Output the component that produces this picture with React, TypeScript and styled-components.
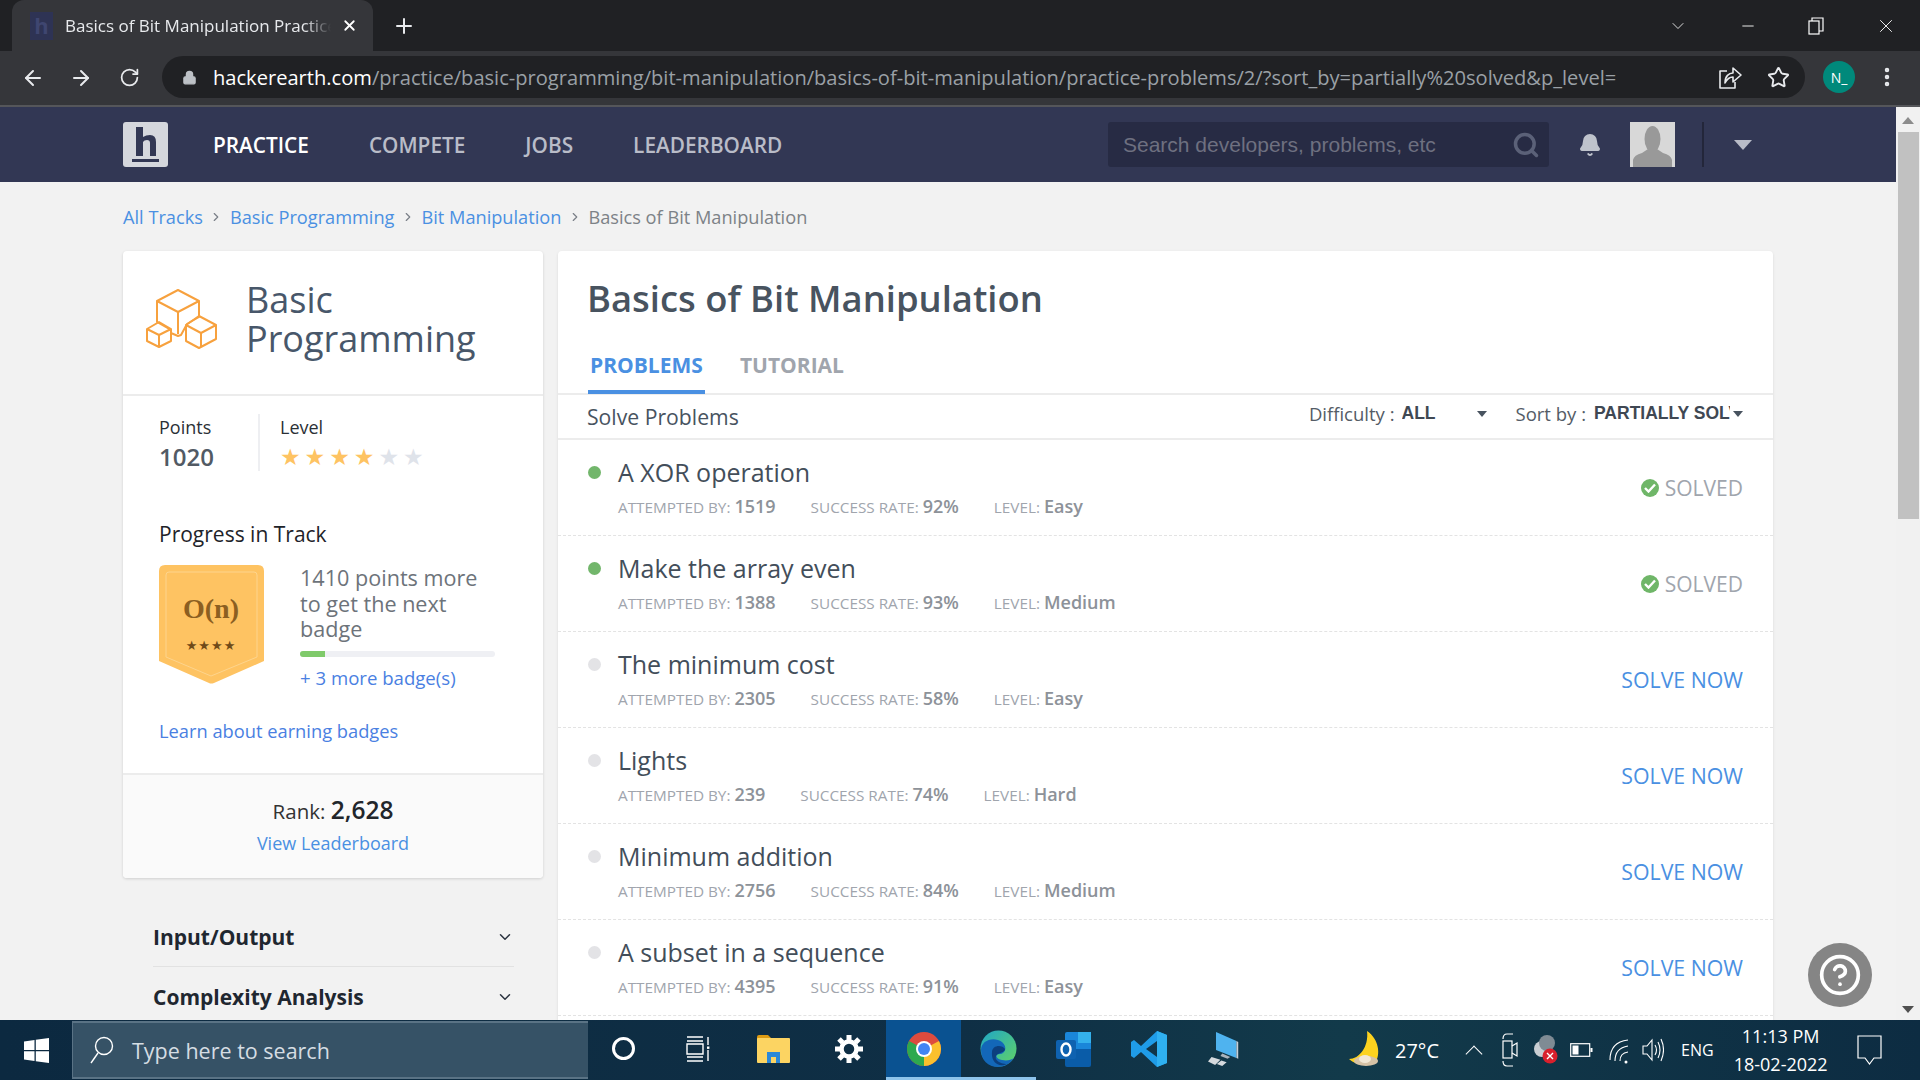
import styled, { createGlobalStyle } from "styled-components";
import { ArrowLeft, ArrowRight, RotateCw, Lock, Star, Search, Bell, ChevronDown, ChevronRight, Minus, Plus, X, MoreVertical, HelpCircle } from "lucide-react";

const GlobalStyle = createGlobalStyle`
  html, body { margin: 0; height: 100%; overflow: hidden; }
  #root { height: 100%; }
  * { box-sizing: border-box; }
  body { font-family: "Open Sans", "Liberation Sans", sans-serif; background: #f2f2f2; }
`;

const problems = [
  { title: "A XOR operation", attempted: "1519", rate: "92%", level: "Easy", solved: true },
  { title: "Make the array even", attempted: "1388", rate: "93%", level: "Medium", solved: true },
  { title: "The minimum cost", attempted: "2305", rate: "58%", level: "Easy", solved: false },
  { title: "Lights", attempted: "239", rate: "74%", level: "Hard", solved: false },
  { title: "Minimum addition", attempted: "2756", rate: "84%", level: "Medium", solved: false },
  { title: "A subset in a sequence", attempted: "4395", rate: "91%", level: "Easy", solved: false },
];

function CubesIcon() {
  return (
    <svg width="72" height="60" viewBox="0 0 72 60" fill="none" stroke="#f7a13e" strokeWidth="2" strokeLinejoin="round">
      <path d="M32 1 L53 12 L53 28 L46 32 L41 35 L35 46 L32 47 L25 44 L25 41 L11 33 L11 12 Z" />
      <path d="M11 12 L32 23 L53 12 M32 23 L32 45" />
      <path d="M13 36 L25 43 L25 55 L13 61 L1 55 L1 43 Z" transform="translate(0 -3)" />
      <path d="M1 40 L13 46 L25 40 M13 46 L13 57" />
      <path d="M53 27 L70 36 L70 50 L53 59 L40 52 L40 36 Z" />
      <path d="M40 36 L55 44 L70 36 M55 44 L55 58" />
    </svg>
  );
}

function BadgeIcon() {
  return (
    <svg width="105" height="119" viewBox="0 0 105 119">
      <path d="M6 0 H99 Q105 0 105 6 V96 L55 118 Q52 119 50 118 L0 96 V6 Q0 0 6 0 Z" fill="#fec362" />
      <path d="M10 7 H95 Q98 7 98 10 V92 L52 111 L7 92 V10 Q7 7 10 7 Z" fill="none" stroke="#fdd48d" strokeWidth="1" />
      <text x="52" y="53" textAnchor="middle" fontFamily="'Liberation Serif', serif" fontWeight="700" fontSize="28" fill="#8c5f21">O(n)</text>
      <text x="52" y="85" textAnchor="middle" fontFamily="'DejaVu Sans', sans-serif" fontSize="13" letterSpacing="1" fill="#6f4a18">★★★★</text>
    </svg>
  );
}

function HackerEarthLogo() {
  return (
    <svg width="45" height="45" viewBox="0 0 45 45">
      <rect width="45" height="45" rx="3" fill="#d5d7dd" />
      <path d="M13 5 H20 V15 Q23 13 27 13 Q33 13 33 20 V34 H27 V21 Q27 18 24 18 Q21 18 20 20 V34 H13 Z" fill="#323754" />
      <rect x="9" y="37" width="27" height="3" fill="#323754" />
    </svg>
  );
}

function ShareIcon() {
  return (
    <svg width="24" height="26" viewBox="0 0 24 26" fill="none" stroke="#e8eaed" strokeWidth="1.6" strokeLinejoin="round">
      <path d="M9 7 H2 V24 H17 V18" />
      <path d="M7 19 C7 12 11 9 15 9 V4 L23 11 L15 18 V13 C11 13 9 15 7 19 Z" />
    </svg>
  );
}

function WindowsLogo() {
  return (
    <svg width="25" height="25" viewBox="0 0 25 25" fill="#fff">
      <path d="M0 3.5 L10.5 2 V12 H0 Z M11.8 1.8 L25 0 V12 H11.8 Z M0 13.2 H10.5 V23 L0 21.6 Z M11.8 13.2 H25 V25 L11.8 23.2 Z" />
    </svg>
  );
}

function TaskViewIcon() {
  return (
    <svg width="26" height="26" viewBox="0 0 26 26" fill="none" stroke="#fff" strokeWidth="1.4">
      <path d="M1 1 H17 M1 5 H17 M1 8 H17 V18 H1 Z M1 21 H17 M1 25 H17 M22 1 V9 M22 14 V25" />
      <rect x="21" y="10.5" width="2.4" height="2.4" fill="#fff" stroke="none" />
    </svg>
  );
}

function FolderIcon() {
  return (
    <svg width="33" height="28" viewBox="0 0 33 28">
      <path d="M0 2 Q0 0 2 0 H11 L15 4 H0 Z" fill="#dd9b13" />
      <rect x="0" y="3" width="33" height="25" rx="1" fill="#fcd462" />
      <path d="M10 28 V17 H23 V28 H19 V22 H14 V28 Z" fill="#2b88d8" />
    </svg>
  );
}

function GearIcon() {
  return (
    <svg width="30" height="30" viewBox="0 0 30 30" fill="none" stroke="#fff">
      <circle cx="15" cy="15" r="7.5" strokeWidth="4.5" />
      <path d="M15 1 V6 M15 24 V29 M1 15 H6 M24 15 H29 M5 5 L8.5 8.5 M21.5 21.5 L25 25 M25 5 L21.5 8.5 M8.5 21.5 L5 25" strokeWidth="5" />
    </svg>
  );
}

function ChromeLogo() {
  return (
    <svg width="34" height="34" viewBox="0 0 34 34">
      <circle cx="17" cy="17" r="17" fill="#dd4b3e" />
      <path d="M17 17 L32 9 A17 17 0 0 1 17 34 Z" fill="#fbc02d" />
      <path d="M17 17 L17 34 A17 17 0 0 1 2 9 Z" fill="#2da94f" />
      <circle cx="17" cy="17" r="8" fill="#fff" />
      <circle cx="17" cy="17" r="6" fill="#4285f4" />
    </svg>
  );
}

function EdgeLogo() {
  return (
    <svg width="37" height="37" viewBox="0 0 37 37">
      <defs>
        <linearGradient id="edgeTop" x1="0" y1="0" x2="1" y2="1">
          <stop offset="0" stopColor="#1fa6c8" />
          <stop offset="1" stopColor="#63d463" />
        </linearGradient>
      </defs>
      <circle cx="18.5" cy="18.5" r="18" fill="url(#edgeTop)" />
      <path d="M1 20 C1 10 14 6 22 12 C28 17 25 24 20 24 C14 24 16 29 22 30 C27 31 31 30 34 28 C30 34 24 37 18 37 C8 37 1 30 1 20 Z" fill="#1367b8" />
      <path d="M12 22 C12 15 22 14 25 19 C25 24 14 22 16 29 C18 33 24 34 27 34 C18 38 11 32 12 22 Z" fill="#0c3f7e" />
    </svg>
  );
}

function OutlookLogo() {
  return (
    <svg width="36" height="36" viewBox="0 0 36 36">
      <rect x="9" y="1" width="26" height="32" rx="2" fill="#1a86d9" />
      <rect x="22" y="1" width="13" height="11" fill="#34b1ec" />
      <path d="M9 18 L35 18 V34 Q35 36 33 36 H11 Q9 36 9 34 Z" fill="#0a5ca8" />
      <rect x="0" y="9" width="20" height="19" rx="2" fill="#0f62b0" />
      <ellipse cx="10" cy="18.5" rx="4.5" ry="6" fill="none" stroke="#fff" strokeWidth="2.4" />
    </svg>
  );
}

function VsCodeLogo() {
  return (
    <svg width="36" height="36" viewBox="0 0 36 36">
      <path d="M26 0 L36 4 V32 L26 36 L10 21 L3 27 L0 25 V11 L3 9 L10 15 Z M26 10 L15 18 L26 26 Z" fill="#1f9ce8" />
      <path d="M26 0 L36 4 V32 L26 36 Z" fill="#2fb0f0" />
    </svg>
  );
}

function ComputerIcon() {
  return (
    <svg width="32" height="36" viewBox="0 0 36 38">
      <path d="M9 0 L32 10 V29 L9 20 Z" fill="#4fb3ef" />
      <path d="M32 10 L34 11 V30 L32 29 Z" fill="#c7d0d8" />
      <path d="M16 24 L25 28 L22 30 L14 27 Z" fill="#aab4bd" />
      <path d="M4 28 L14 31 L8 37 L0 33 Z M15 32 L21 34 L16 38 L10 36 Z" fill="#d5d9dd" />
    </svg>
  );
}

function MoonIcon() {
  return (
    <svg width="34" height="38" viewBox="0 0 34 38">
      <path d="M18 0 C30 8 32 24 26 32 C18 36 6 34 0 28 C10 28 20 16 18 0 Z" fill="#fcd21f" />
      <ellipse cx="17" cy="30" rx="12" ry="5" fill="#d6c2a6" />
      <ellipse cx="16" cy="28" rx="6" ry="4" fill="#f2e7d5" />
    </svg>
  );
}

function MeetIcon() {
  return (
    <svg width="16" height="34" viewBox="0 0 16 34" fill="none" stroke="#fff" strokeWidth="1.2">
      <path d="M1 6 Q1 1 5 1 H11 M1 28 Q1 33 5 33 H11" />
      <rect x="1" y="8" width="9" height="17" />
      <path d="M10 13 L15 10 V23 L10 20" />
    </svg>
  );
}

function CloudErrorIcon() {
  return (
    <svg width="26" height="34" viewBox="0 0 26 34">
      <circle cx="9" cy="16" r="8" fill="#c9ced3" />
      <circle cx="14" cy="10" r="8" fill="#7f8b94" />
      <circle cx="17" cy="23" r="7.5" fill="#d9202c" />
      <path d="M14 20 L20 26 M20 20 L14 26" stroke="#fff" strokeWidth="1.4" />
    </svg>
  );
}

function BatteryIcon() {
  return (
    <svg width="23" height="14" viewBox="0 0 23 14">
      <rect x="0.7" y="0.7" width="19" height="12.6" fill="none" stroke="#fff" strokeWidth="1.2" />
      <rect x="2.5" y="2.5" width="6" height="9" fill="#fff" />
      <rect x="20.5" y="5" width="2" height="4" fill="#fff" />
    </svg>
  );
}

function WifiIcon() {
  return (
    <svg width="20" height="32" viewBox="0 0 20 32" fill="none" stroke="#fff" strokeWidth="1.1">
      <path d="M1 26 Q1 8 19 6 M6 27 Q6 14 19 12 M11 27 Q11 19 19 18" />
      <circle cx="17" cy="28" r="1.5" fill="#fff" stroke="none" />
    </svg>
  );
}

function SpeakerIcon() {
  return (
    <svg width="22" height="32" viewBox="0 0 22 32" fill="none" stroke="#fff" strokeWidth="1.1">
      <path d="M1 12 H5 L10 6 V26 L5 20 H1 Z M13 11 Q16 16 13 21 M16 8 Q20 16 16 24 M19 5 Q24 16 19 27" />
    </svg>
  );
}

function NotificationIcon() {
  return (
    <svg width="25" height="30" viewBox="0 0 25 30" fill="none" stroke="#fff" strokeWidth="1.2">
      <path d="M1 1 H24 V23 H17 L12.5 29 L8 23 H1 Z" />
    </svg>
  );
}

function RestoreIcon() {
  return (
    <svg width="16" height="18" viewBox="0 0 16 18" fill="none" stroke="#fff" strokeWidth="1.2">
      <rect x="1" y="4" width="10" height="13" />
      <path d="M4 4 V1 H15 V14 H11" />
    </svg>
  );
}

export default function App() {
  return (
    <Screen>
      <GlobalStyle />
      <TabStrip>
        <Tab>
          <Favicon>h</Favicon>
          <TabTitle>Basics of Bit Manipulation Practice</TabTitle>
          <X size={17} color="#fff" strokeWidth={2.5} />
        </Tab>
        <NewTab><Plus size={24} strokeWidth={2} /></NewTab>
        <WindowControls>
          <ChevronDown size={20} strokeWidth={1} />
          <Minus size={18} strokeWidth={1.2} />
          <RestoreIcon />
          <X size={22} strokeWidth={1} />
        </WindowControls>
      </TabStrip>
      <Toolbar>
        <ToolIcon><ArrowLeft size={24} strokeWidth={2} /></ToolIcon>
        <ToolIcon><ArrowRight size={24} strokeWidth={2} /></ToolIcon>
        <ToolIcon><RotateCw size={21} strokeWidth={2} /></ToolIcon>
        <AddressBar>
          <Lock size={15} color="#bdc1c6" fill="#bdc1c6" />
          <Url><strong>hackerearth.com</strong>/practice/basic-programming/bit-manipulation/basics-of-bit-manipulation/practice-problems/2/?sort_by=partially%20solved&amp;p_level=</Url>
          <AddressActions>
            <ShareIcon />
            <Star size={23} strokeWidth={2} />
          </AddressActions>
        </AddressBar>
        <ProfileDot>N_</ProfileDot>
        <MoreVertical size={24} color="#e8eaed" strokeWidth={2.5} />
      </Toolbar>
      <Body>
        <Viewport>
          <NavBar>
            <LogoSlot><HackerEarthLogo /></LogoSlot>
            <NavLink $active>PRACTICE</NavLink>
            <NavLink>COMPETE</NavLink>
            <NavLink>JOBS</NavLink>
            <NavLink>LEADERBOARD</NavLink>
            <NavRight>
              <SearchBox>
                <SearchText>Search developers, problems, etc</SearchText>
                <Search size={28} color="#5b6178" strokeWidth={3} />
              </SearchBox>
              <BellSlot><Bell size={24} color="#bfc3cc" fill="#bfc3cc" /></BellSlot>
              <Avatar>
                <svg width="45" height="45" viewBox="0 0 45 45">
                  <ellipse cx="22.5" cy="17" rx="8" ry="13" fill="#999" />
                  <path d="M3 45 V38 Q4 33 12 31 L18 27 H27 L33 31 Q41 33 42 38 V45 Z" fill="#999" />
                </svg>
              </Avatar>
              <NavDivider />
              <NavCaret />
            </NavRight>
          </NavBar>
          <Page>
            <Breadcrumbs>
              <Crumb>All Tracks</Crumb><Sep><ChevronRight size={14} /></Sep>
              <Crumb>Basic Programming</Crumb><Sep><ChevronRight size={14} /></Sep>
              <Crumb>Bit Manipulation</Crumb><Sep><ChevronRight size={14} /></Sep>
              <CurrentCrumb>Basics of Bit Manipulation</CurrentCrumb>
            </Breadcrumbs>
            <Columns>
              <Sidebar>
                <TrackCard>
                  <TrackHeader>
                    <CubesIcon />
                    <TrackName>Basic Programming</TrackName>
                  </TrackHeader>
                  <TrackBody>
                    <StatsRow>
                      <PointsStat>
                        <StatLabel>Points</StatLabel>
                        <PointsValue>1020</PointsValue>
                      </PointsStat>
                      <LevelStat>
                        <StatLabel>Level</StatLabel>
                        <Stars>
                          {[0, 1, 2, 3, 4, 5].map(i => (
                            <StarGlyph key={i} $on={i < 4}>★</StarGlyph>
                          ))}
                        </Stars>
                      </LevelStat>
                    </StatsRow>
                    <ProgressTitle>Progress in Track</ProgressTitle>
                    <BadgeRow>
                      <BadgeIcon />
                      <BadgeInfo>
                        <BadgeText>1410 points more to get the next badge</BadgeText>
                        <ProgressTrack><ProgressFill style={{ width: "13%" }} /></ProgressTrack>
                        <MoreBadges>+ 3 more badge(s)</MoreBadges>
                      </BadgeInfo>
                    </BadgeRow>
                    <LearnLink>Learn about earning badges</LearnLink>
                  </TrackBody>
                  <RankFooter>
                    <RankLine>Rank: <RankValue>2,628</RankValue></RankLine>
                    <LeaderLink>View Leaderboard</LeaderLink>
                  </RankFooter>
                </TrackCard>
                <Accordion>
                  <AccordionItem $border>
                    Input/Output
                    <ChevronDown size={18} color="#2b3340" />
                  </AccordionItem>
                  <AccordionItem>
                    Complexity Analysis
                    <ChevronDown size={18} color="#2b3340" />
                  </AccordionItem>
                </Accordion>
              </Sidebar>
              <MainCard>
                <MainTitle>Basics of Bit Manipulation</MainTitle>
                <Tabs>
                  <TabLink $active>PROBLEMS</TabLink>
                  <TabLink>TUTORIAL</TabLink>
                </Tabs>
                <FilterBar>
                  <FilterHeading>Solve Problems</FilterHeading>
                  <Filter>
                    Difficulty :<FilterValue $width={72} $left={7}>ALL</FilterValue>
                  </Filter>
                  <SmallCaret $gap={29} />
                  <Filter>
                    Sort by :<FilterValue $width={136} $left={8}>PARTIALLY SOLVED</FilterValue>
                  </Filter>
                  <SmallCaret />
                </FilterBar>
                {problems.map(p => (
                  <ProblemRow key={p.title}>
                    <StatusDot $solved={p.solved} />
                    <ProblemInfo>
                      <ProblemTitle>{p.title}</ProblemTitle>
                      <Meta>
                        <MetaItem>ATTEMPTED BY: <b>{p.attempted}</b></MetaItem>
                        <MetaItem>SUCCESS RATE: <b>{p.rate}</b></MetaItem>
                        <MetaItem>LEVEL: <b>{p.level}</b></MetaItem>
                      </Meta>
                    </ProblemInfo>
                    {p.solved ? (
                      <Solved>
                        <CheckBadge>
                          <svg width="12" height="10" viewBox="0 0 12 10" fill="none" stroke="#fff" strokeWidth="2.4">
                            <path d="M1 5 L4.5 8.5 L11 1.5" />
                          </svg>
                        </CheckBadge>
                        SOLVED
                      </Solved>
                    ) : (
                      <SolveNow>SOLVE NOW</SolveNow>
                    )}
                  </ProblemRow>
                ))}
              </MainCard>
            </Columns>
          </Page>
          <HelpButton><HelpCircle size={44} color="#fff" strokeWidth={2} /></HelpButton>
        </Viewport>
        <Scrollbar>
          <ScrollArrow $up />
          <ScrollThumb />
          <ScrollArrow />
        </Scrollbar>
      </Body>
      <Taskbar>
        <StartButton><WindowsLogo /></StartButton>
        <TaskSearch>
          <svg width="24" height="28" viewBox="0 0 24 28" fill="none" stroke="#fff" strokeWidth="1.4">
            <circle cx="14" cy="10" r="8.5" />
            <path d="M8 17 L1 27" />
          </svg>
          <TaskSearchText>Type here to search</TaskSearchText>
        </TaskSearch>
        <TaskSlot><CortanaRing /></TaskSlot>
        <TaskSlot><TaskViewIcon /></TaskSlot>
        <TaskSlot><FolderIcon /></TaskSlot>
        <TaskSlot><GearIcon /></TaskSlot>
        <TaskSlot $active><ChromeLogo /></TaskSlot>
        <TaskSlot $open><EdgeLogo /></TaskSlot>
        <TaskSlot><OutlookLogo /></TaskSlot>
        <TaskSlot><VsCodeLogo /></TaskSlot>
        <TaskSlot><ComputerIcon /></TaskSlot>
        <Tray>
          <TrayItem><MoonIcon /></TrayItem>
          <TrayItem $left={12}><Temp>27°C</Temp></TrayItem>
          <TrayItem $left={27}><TrayCaret /></TrayItem>
          <TrayItem $left={20}><MeetIcon /></TrayItem>
          <TrayItem $left={15}><CloudErrorIcon /></TrayItem>
          <TrayItem $left={11}><BatteryIcon /></TrayItem>
          <TrayItem $left={16}><WifiIcon /></TrayItem>
          <TrayItem $left={13}><SpeakerIcon /></TrayItem>
          <TrayItem $left={17}><TrayText>ENG</TrayText></TrayItem>
          <TrayItem $left={22}>
            <Clock>
              <span>11:13 PM</span>
              <span>18-02-2022</span>
            </Clock>
          </TrayItem>
          <TrayItem $left={31}><NotificationIcon /></TrayItem>
        </Tray>
      </Taskbar>
    </Screen>
  );
}

const Screen = styled.div`
  height: 100vh;
  display: flex;
  flex-direction: column;
  overflow: hidden;
`;

const TabStrip = styled.div`
  height: 51px;
  flex: none;
  background: #202124;
  display: flex;
  align-items: flex-end;
  padding-left: 12px;
  color: #fff;
`;

const Tab = styled.div`
  width: 361px;
  height: 51px;
  background: #35363a;
  border-radius: 12px 12px 0 0;
  display: flex;
  align-items: center;
  padding: 0 15px 0 18px;
  color: #fff;
`;

const Favicon = styled.span`
  width: 23px;
  height: 28px;
  flex: none;
  background: #2e3354;
  color: #3f4670;
  font-size: 22px;
  font-weight: 700;
  line-height: 26px;
  text-align: center;
`;

const TabTitle = styled.span`
  flex: 1;
  margin-left: 12px;
  margin-right: 10px;
  font-size: 17px;
  white-space: nowrap;
  overflow: hidden;
  color: #e8eaed;
  -webkit-mask-image: linear-gradient(to right, #000 90%, transparent);
  mask-image: linear-gradient(to right, #000 90%, transparent);
`;

const NewTab = styled.div`
  width: 62px;
  height: 51px;
  display: flex;
  align-items: center;
  justify-content: center;
  color: #e8eaed;
`;

const WindowControls = styled.div`
  margin-left: auto;
  height: 51px;
  padding-right: 23px;
  display: flex;
  align-items: center;
  gap: 51px;
  color: #fff;
  margin-top: -8px;
`;

const Toolbar = styled.div`
  height: 56px;
  flex: none;
  background: #35363a;
  border-bottom: 2px solid #55565a;
  display: flex;
  align-items: center;
  padding: 0 16px 2px 9px;
  color: #e8eaed;
`;

const ToolIcon = styled.div`
  width: 48px;
  display: flex;
  justify-content: center;
  margin-top: 1px;
`;

const AddressBar = styled.div`
  width: 1643px;
  height: 42px;
  margin-left: 9px;
  margin-right: 18px;
  background: #202124;
  border-radius: 21px;
  display: flex;
  align-items: center;
  padding: 0 15px 0 20px;
`;

const Url = styled.div`
  margin-left: 16px;
  font-size: 20.1px;
  color: #9aa0a6;
  white-space: nowrap;
  flex: 1;
  overflow: hidden;

  & strong {
    font-weight: 400;
    color: #fff;
  }
`;

const AddressActions = styled.div`
  display: flex;
  align-items: center;
  gap: 25px;
  color: #e8eaed;
`;

const ProfileDot = styled.div`
  width: 32px;
  height: 32px;
  margin-right: 20px;
  border-radius: 50%;
  background: #00897b;
  color: #fff;
  font-size: 14px;
  display: flex;
  align-items: center;
  justify-content: center;
`;

const Body = styled.div`
  flex: 1;
  min-height: 0;
  display: flex;
`;

const Viewport = styled.div`
  flex: 1;
  min-width: 0;
  position: relative;
  overflow: hidden;
`;

const NavBar = styled.div`
  height: 75px;
  background: #323754;
  display: flex;
  align-items: center;
  padding-left: 123px;
  padding-right: 144px;
`;

const LogoSlot = styled.div`
  width: 45px;
  height: 45px;
  margin-right: 45px;
`;

const NavLink = styled.a<{ $active?: boolean }>`
  margin-right: 60px;
  font-size: 20.8px;
  font-weight: 600;
  color: ${({ $active }) => ($active ? "#fff" : "#b9bcc8")};
`;

const NavRight = styled.div`
  margin-left: auto;
  display: flex;
  align-items: center;
`;

const SearchBox = styled.div`
  width: 441px;
  height: 45px;
  background: #272b44;
  border-radius: 3px;
  display: flex;
  align-items: center;
  justify-content: space-between;
  padding: 0 9px 0 15px;
`;

const SearchText = styled.span`
  font-family: "Liberation Sans", sans-serif;
  font-size: 21px;
  color: #6e7080;
`;

const BellSlot = styled.div`
  width: 81px;
  display: flex;
  justify-content: center;
`;

const Avatar = styled.div`
  width: 45px;
  height: 45px;
  background: #d8d8d8;
`;

const NavDivider = styled.div`
  width: 2px;
  height: 45px;
  margin-left: 27px;
  background: #23263a;
`;

const NavCaret = styled.div`
  margin-left: 30px;
  width: 0;
  height: 0;
  border-left: 9.5px solid transparent;
  border-right: 9.5px solid transparent;
  border-top: 10px solid #b9bcc8;
`;

const Page = styled.div`
  padding: 0 123px;
`;

const Breadcrumbs = styled.div`
  height: 69px;
  display: flex;
  align-items: center;
  font-size: 18.2px;
`;

const Crumb = styled.a`
  color: #4a90e2;
`;

const Sep = styled.span`
  width: 27px;
  display: flex;
  justify-content: center;
  color: #7a7f87;
`;

const CurrentCrumb = styled.span`
  color: #7d8287;
`;

const Columns = styled.div`
  display: grid;
  grid-template-columns: 420px 1215px;
  gap: 15px;
`;

const Sidebar = styled.div`
  min-width: 0;
`;

const TrackCard = styled.div`
  height: 627px;
  background: #fff;
  border-radius: 4px;
  box-shadow: 0 1px 3px rgba(0, 0, 0, 0.15);
  display: flex;
  flex-direction: column;
  overflow: hidden;
`;

const TrackHeader = styled.div`
  height: 145px;
  flex: none;
  border-bottom: 2px solid #ececec;
  display: flex;
  align-items: center;
  gap: 28px;
  padding: 0 0 8px 23px;
`;

const TrackName = styled.div`
  width: 270px;
  font-size: 36px;
  line-height: 39px;
  color: #48576a;
`;

const TrackBody = styled.div`
  flex: 1;
  padding: 18px 36px 0;
`;

const StatsRow = styled.div`
  display: flex;
  height: 57px;
`;

const PointsStat = styled.div`
  width: 101px;
  border-right: 2px solid #eeeff2;
`;

const LevelStat = styled.div`
  padding-left: 20px;
`;

const StatLabel = styled.div`
  font-size: 18px;
  line-height: 26px;
  color: #2b3036;
`;

const PointsValue = styled.div`
  font-size: 24px;
  font-weight: 600;
  line-height: 34px;
  color: #525a64;
`;

const Stars = styled.div`
  display: flex;
  height: 30px;
  margin-top: 2px;
  align-items: center;
`;

const StarGlyph = styled.span<{ $on: boolean }>`
  width: 24.6px;
  font-family: "DejaVu Sans", sans-serif;
  font-size: 23px;
  line-height: 30px;
  color: ${({ $on }) => ($on ? "#fec362" : "#dfe3ea")};
`;

const ProgressTitle = styled.div`
  margin-top: 49px;
  font-size: 21px;
  line-height: 28px;
  color: #1e2329;
`;

const BadgeRow = styled.div`
  margin-top: 17px;
  display: flex;
  gap: 36px;
`;

const BadgeInfo = styled.div`
  flex: 1;
`;

const BadgeText = styled.div`
  width: 190px;
  font-size: 21.6px;
  line-height: 25.5px;
  color: #6d737a;
`;

const ProgressTrack = styled.div`
  width: 195px;
  height: 6px;
  margin-top: 9px;
  background: #eff0f4;
  border-radius: 3px;
  overflow: hidden;
`;

const ProgressFill = styled.div`
  height: 100%;
  background: #7fca6a;
`;

const MoreBadges = styled.div`
  margin-top: 8px;
  font-size: 18.6px;
  line-height: 26px;
  color: #4a7fe2;
`;

const LearnLink = styled.div`
  margin-top: 27px;
  font-size: 18.3px;
  line-height: 26px;
  color: #4a7fe2;
`;

const RankFooter = styled.div`
  height: 105px;
  flex: none;
  background: #fafafa;
  border-top: 2px solid #ececec;
  text-align: center;
  padding-top: 19px;
`;

const RankLine = styled.div`
  font-size: 20.5px;
  line-height: 32px;
  color: #333;
`;

const RankValue = styled.span`
  font-size: 24.5px;
  font-weight: 600;
  color: #22262b;
`;

const LeaderLink = styled.div`
  font-size: 18px;
  line-height: 32px;
  color: #4a90e2;
`;

const Accordion = styled.div`
  margin-top: 29px;
  padding: 0 29px 0 30px;
`;

const AccordionItem = styled.div<{ $border?: boolean }>`
  height: 60px;
  display: flex;
  align-items: center;
  justify-content: space-between;
  font-size: 21px;
  font-weight: 700;
  color: #1f2730;
  border-bottom: ${({ $border }) => ($border ? "1px solid #e2e2e2" : "none")};
`;

const MainCard = styled.div`
  background: #fff;
  border-radius: 4px 4px 0 0;
  box-shadow: 0 1px 3px rgba(0, 0, 0, 0.1);
  min-height: 800px;
`;

const MainTitle = styled.h1`
  margin: 0;
  padding: 23px 0 0 29px;
  font-size: 36.4px;
  font-weight: 600;
  line-height: 48px;
  color: #48535f;
`;

const Tabs = styled.div`
  height: 73px;
  padding-left: 30px;
  border-bottom: 2px solid #ececec;
  display: flex;
  align-items: flex-end;
  gap: 33px;
`;

const TabLink = styled.div<{ $active?: boolean }>`
  height: 47px;
  padding: 0 2px;
  margin-bottom: -1px;
  font-size: 21px;
  font-weight: 700;
  line-height: 36px;
  color: ${({ $active }) => ($active ? "#4a90e2" : "#a0a5ad")};
  border-bottom: 4px solid ${({ $active }) => ($active ? "#4a90e2" : "transparent")};
`;

const FilterBar = styled.div`
  height: 45px;
  padding: 0 30px 0 29px;
  border-bottom: 2px solid #ececec;
  display: flex;
  align-items: center;
`;

const FilterHeading = styled.div`
  margin-right: auto;
  font-size: 21.2px;
  color: #48535f;
`;

const Filter = styled.div`
  display: flex;
  align-items: center;
  font-size: 18.5px;
  color: #545c66;
  margin-top: -6px;
`;

const FilterValue = styled.span<{ $width: number; $left: number }>`
  width: ${({ $width }) => $width}px;
  margin-left: ${({ $left }) => $left}px;
  overflow: hidden;
  white-space: nowrap;
  font-family: "Liberation Sans", sans-serif;
  font-size: 17.5px;
  font-weight: 700;
  color: #3f4853;
`;

const SmallCaret = styled.div<{ $gap?: number }>`
  width: 0;
  height: 0;
  margin-top: -5px;
  margin-left: 3px;
  margin-right: ${({ $gap }) => $gap ?? 0}px;
  border-left: 5.5px solid transparent;
  border-right: 5.5px solid transparent;
  border-top: 6px solid #48535f;
`;

const ProblemRow = styled.div`
  height: 96px;
  padding: 0 30px;
  border-bottom: 1px dashed #e3e3e3;
  display: flex;
  align-items: center;
`;

const StatusDot = styled.span<{ $solved: boolean }>`
  width: 13px;
  height: 13px;
  flex: none;
  margin-right: 17px;
  margin-top: -30px;
  border-radius: 50%;
  background: ${({ $solved }) => ($solved ? "#72b66b" : "#e3e3e6")};
`;

const ProblemInfo = styled.div`
  flex: 1;
`;

const ProblemTitle = styled.div`
  font-size: 25px;
  font-weight: 500;
  line-height: 30px;
  color: #434e5a;
`;

const Meta = styled.div`
  margin-top: 7px;
  display: flex;
  gap: 35px;
`;

const MetaItem = styled.span`
  font-size: 15.3px;
  line-height: 24px;
  color: #a0a5ad;

  & b {
    font-size: 18px;
    font-weight: 600;
    color: #8d9299;
  }
`;

const Solved = styled.div`
  display: flex;
  align-items: center;
  gap: 6px;
  font-size: 21px;
  color: #a0a5ad;
`;

const CheckBadge = styled.span`
  width: 18px;
  height: 18px;
  border-radius: 50%;
  background: #6fb668;
  display: flex;
  align-items: center;
  justify-content: center;
`;

const SolveNow = styled.a`
  font-size: 21.3px;
  color: #4a90e2;
`;

const HelpButton = styled.div`
  position: absolute;
  right: 24px;
  bottom: 13px;
  width: 64px;
  height: 64px;
  border-radius: 50%;
  background: #858585;
  display: flex;
  align-items: center;
  justify-content: center;
`;

const Scrollbar = styled.div`
  width: 24px;
  flex: none;
  background: #f1f1f1;
  display: flex;
  flex-direction: column;
  align-items: center;
  padding-top: 10px;
`;

const ScrollArrow = styled.div<{ $up?: boolean }>`
  width: 0;
  height: 0;
  flex: none;
  border-left: 6px solid transparent;
  border-right: 6px solid transparent;
  ${({ $up }) => ($up ? "border-bottom: 7px solid #8c8c8c;" : "border-top: 7px solid #505050;")}

  &:last-child {
    margin-top: auto;
    margin-bottom: 7px;
  }
`;

const ScrollThumb = styled.div`
  width: 21px;
  height: 387px;
  flex: none;
  margin-top: 8px;
  background: #c1c1c1;
`;

const Taskbar = styled.div`
  height: 60px;
  flex: none;
  background: linear-gradient(to right, #0c2940 0%, #0f2f45 50%, #123a4a 70%, #0d2c42 100%);
  display: flex;
  align-items: stretch;
`;

const StartButton = styled.div`
  width: 72px;
  flex: none;
  display: flex;
  align-items: center;
  justify-content: center;
`;

const TaskSearch = styled.div`
  width: 516px;
  flex: none;
  margin: 1px -2px 1px 0;
  padding-left: 17px;
  background: #365266;
  border: 2px solid #5a7385;
  border-width: 2px 0 2px 1px;
  display: flex;
  align-items: center;
  gap: 18px;
`;

const TaskSearchText = styled.span`
  font-size: 21.5px;
  margin-top: 1px;
  color: #d5dde3;
`;

const TaskSlot = styled.div<{ $active?: boolean; $open?: boolean }>`
  width: 75px;
  flex: none;
  display: flex;
  align-items: center;
  justify-content: center;
  background: ${({ $active }) => ($active ? "#0a5291" : "transparent")};
  border-bottom: 3px solid ${({ $active, $open }) => ($active || $open ? "#8ec4ec" : "transparent")};
`;

const CortanaRing = styled.div`
  width: 23px;
  height: 23px;
  border: 3.5px solid #fff;
  border-radius: 50%;
`;

const Tray = styled.div`
  flex: 1;
  display: flex;
  align-items: center;
  padding-left: 88px;
  color: #fff;
`;

const TrayItem = styled.div<{ $left?: number }>`
  flex: none;
  display: flex;
  align-items: center;
  margin-left: ${({ $left }) => $left ?? 0}px;
`;

const Temp = styled.span`
  font-size: 20px;
`;

const TrayCaret = styled.span`
  width: 12px;
  height: 12px;
  margin: 8px 2px 0;
  border-left: 1.5px solid #fff;
  border-top: 1.5px solid #fff;
  transform: rotate(45deg);
`;

const TrayText = styled.span`
  font-size: 16px;
`;

const Clock = styled.div`
  display: flex;
  flex-direction: column;
  align-items: center;
  width: 90px;
  font-size: 18px;
  line-height: 28px;
  white-space: nowrap;
`;
